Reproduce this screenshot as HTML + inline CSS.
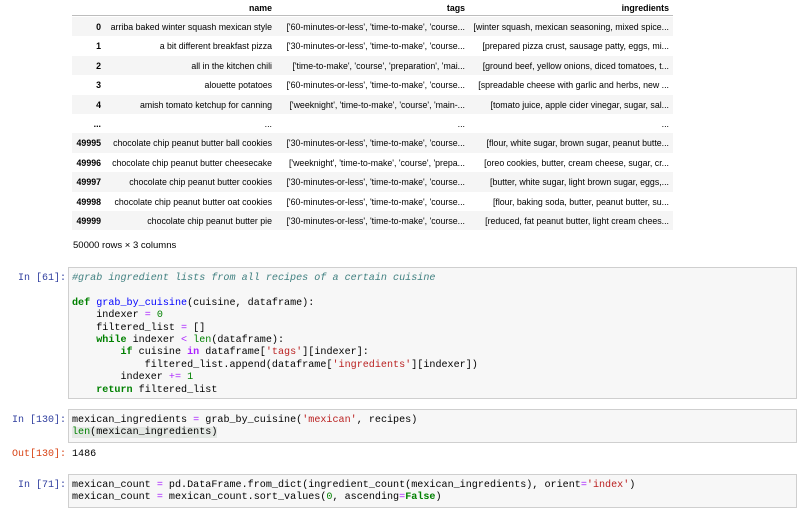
<!DOCTYPE html>
<html><head><meta charset="utf-8"><style>
body{margin:0;width:806px;height:515px;background:#fff;position:relative;overflow:hidden;font-family:"Liberation Sans",sans-serif}
.r{position:absolute;left:72px;width:601px;height:19.4px;font-size:8.8px;color:#000}
.r.s{background:#f5f5f5}
.r span{position:absolute;top:5px;white-space:nowrap;text-align:right}
.i{right:572px;font-weight:bold}
.n{right:401px}.t{right:208px}.g{right:4px}
.box{position:absolute;left:68px;width:729px;background:#f7f7f7;border:1px solid #cfcfcf;box-sizing:border-box}
pre{margin:0;font-family:"Liberation Mono",monospace;font-size:10.1px;line-height:12.4px;color:#000;position:absolute;left:72px}
.p{position:absolute;font-family:"Liberation Mono",monospace;font-size:10px;color:#303f9f;text-align:right;width:66px;left:0}
.o{color:#d84315}
.c{color:#408080;font-style:italic}.k{color:#008000;font-weight:bold}.f{color:#0000ff}.s1{color:#ba2121}.op{color:#aa22ff}.nm{color:#008000}.bi{color:#008000}
</style></head><body>
<div style="position:absolute;left:72px;top:0;width:601px;height:15px;border-bottom:1px solid #bdbdbd;font-size:8.8px;font-weight:bold">
<span style="position:absolute;right:401px;top:3px">name</span><span style="position:absolute;right:208px;top:3px">tags</span><span style="position:absolute;right:4px;top:3px">ingredients</span></div>
<div class="r s" style="top:17px"><span class="i">0</span><span class="n">arriba baked winter squash mexican style</span><span class="t">['60-minutes-or-less', 'time-to-make', 'course...</span><span class="g">[winter squash, mexican seasoning, mixed spice...</span></div>
<div class="r" style="top:36.4px"><span class="i">1</span><span class="n">a bit different breakfast pizza</span><span class="t">['30-minutes-or-less', 'time-to-make', 'course...</span><span class="g">[prepared pizza crust, sausage patty, eggs, mi...</span></div>
<div class="r s" style="top:55.8px"><span class="i">2</span><span class="n">all in the kitchen chili</span><span class="t">['time-to-make', 'course', 'preparation', 'mai...</span><span class="g">[ground beef, yellow onions, diced tomatoes, t...</span></div>
<div class="r" style="top:75.2px"><span class="i">3</span><span class="n">alouette potatoes</span><span class="t">['60-minutes-or-less', 'time-to-make', 'course...</span><span class="g">[spreadable cheese with garlic and herbs, new ...</span></div>
<div class="r s" style="top:94.6px"><span class="i">4</span><span class="n">amish tomato ketchup for canning</span><span class="t">['weeknight', 'time-to-make', 'course', 'main-...</span><span class="g">[tomato juice, apple cider vinegar, sugar, sal...</span></div>
<div class="r" style="top:114px"><span class="i">...</span><span class="n">...</span><span class="t">...</span><span class="g">...</span></div>
<div class="r s" style="top:133.4px"><span class="i">49995</span><span class="n">chocolate chip peanut butter ball cookies</span><span class="t">['30-minutes-or-less', 'time-to-make', 'course...</span><span class="g">[flour, white sugar, brown sugar, peanut butte...</span></div>
<div class="r" style="top:152.8px"><span class="i">49996</span><span class="n">chocolate chip peanut butter cheesecake</span><span class="t">['weeknight', 'time-to-make', 'course', 'prepa...</span><span class="g">[oreo cookies, butter, cream cheese, sugar, cr...</span></div>
<div class="r s" style="top:172.2px"><span class="i">49997</span><span class="n">chocolate chip peanut butter cookies</span><span class="t">['30-minutes-or-less', 'time-to-make', 'course...</span><span class="g">[butter, white sugar, light brown sugar, eggs,...</span></div>
<div class="r" style="top:191.6px"><span class="i">49998</span><span class="n">chocolate chip peanut butter oat cookies</span><span class="t">['60-minutes-or-less', 'time-to-make', 'course...</span><span class="g">[flour, baking soda, butter, peanut butter, su...</span></div>
<div class="r s" style="top:211px"><span class="i">49999</span><span class="n">chocolate chip peanut butter pie</span><span class="t">['30-minutes-or-less', 'time-to-make', 'course...</span><span class="g">[reduced, fat peanut butter, light cream chees...</span></div>
<div style="position:absolute;left:73px;top:240px;font-size:9.5px">50000 rows × 3 columns</div>

<div class="box" style="top:267px;height:132px"></div>
<div class="p" style="top:273px">In [61]:</div>
<pre style="top:273px"><span class="c">#grab ingredient lists from all recipes of a certain cuisine</span>

<span class="k">def</span> <span class="f">grab_by_cuisine</span>(cuisine, dataframe):
    indexer <span class="op">=</span> <span class="nm">0</span>
    filtered_list <span class="op">=</span> []
    <span class="k">while</span> indexer <span class="op">&lt;</span> <span class="bi">len</span>(dataframe):
        <span class="k">if</span> cuisine <span class="op" style="font-weight:bold">in</span> dataframe[<span class="s1">'tags'</span>][indexer]:
            filtered_list.append(dataframe[<span class="s1">'ingredients'</span>][indexer])
        indexer <span class="op">+=</span> <span class="nm">1</span>
    <span class="k">return</span> filtered_list</pre>

<div class="box" style="top:409px;height:34px"></div>
<div class="p" style="top:415px">In [130]:</div>
<pre style="top:415px">mexican_ingredients <span class="op">=</span> grab_by_cuisine(<span class="s1">'mexican'</span>, recipes)
<span style="background:#e4e8e4"><span class="bi">len</span>(mexican_ingredients)</span></pre>
<div class="p o" style="top:449px">Out[130]:</div>
<pre style="top:449px">1486</pre>

<div class="box" style="top:474px;height:34px"></div>
<div class="p" style="top:480px">In [71]:</div>
<pre style="top:480px">mexican_count <span class="op">=</span> pd.DataFrame.from_dict(ingredient_count(mexican_ingredients), orient<span class="op">=</span><span class="s1">'index'</span>)
mexican_count <span class="op">=</span> mexican_count.sort_values(<span class="nm">0</span>, ascending<span class="op">=</span><span class="k">False</span>)</pre>
</body></html>
